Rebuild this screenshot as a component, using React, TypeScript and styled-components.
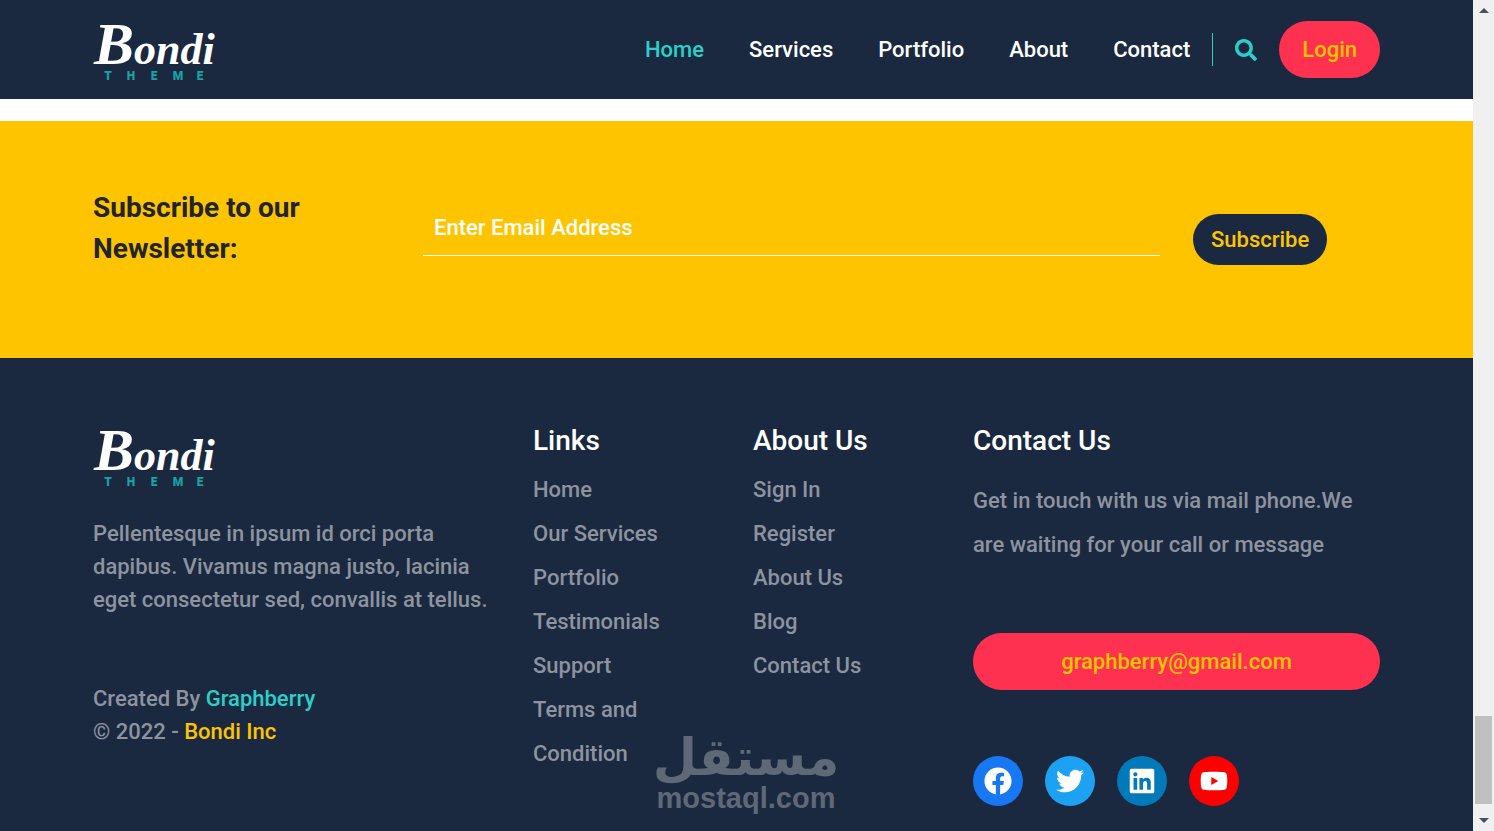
import React from "react";
import styled, { createGlobalStyle } from "styled-components";
import { FaSearch, FaFacebook, FaTwitter, FaLinkedin, FaYoutube } from "react-icons/fa";

const navy = "#1a293f";
const yellow = "#ffc400";
const teal = "#2ccfc8";
const red = "#ff3150";

const GlobalStyle = createGlobalStyle`
  *, *::before, *::after { box-sizing: border-box; }
  body {
    margin: 0;
    font-family: Roboto, "Liberation Sans", sans-serif;
    font-size: 22px;
    font-weight: 500;
    line-height: 33px;
    color: #212529;
    background: #fff;
  }
  a { color: inherit; text-decoration: none; }
  h2, h3, p, ul { margin: 0; padding: 0; font-weight: inherit; }
  ul { list-style: none; }
  button, input { font: inherit; border: 0; }
`;

const Shell = styled.div`
  display: flex;
  height: 100vh;
`;

const Page = styled.div`
  flex: 1;
  min-width: 0;
  display: flex;
  flex-direction: column;
  overflow: hidden;
`;

const Container = styled.div`
  width: 100%;
  max-width: 1287px;
  margin: 0 auto;
`;

const Columns = styled(Container)`
  display: grid;
  grid-template-columns: repeat(12, 1fr);
  column-gap: 33px;
`;

const Column = styled.div<{ $span: number }>`
  grid-column: span ${(p) => p.$span};
  min-width: 0;
`;

const Header = styled.header`
  flex: none;
  background: ${navy};
  padding: 18px 0;
`;

const HeaderRow = styled(Container)`
  display: flex;
  align-items: center;
  justify-content: space-between;
`;

const LogoLink = styled.a`
  display: block;
  width: 122px;
  height: 63px;
`;

const LogoSvg = styled.svg`
  display: block;
  overflow: visible;
`;

const Nav = styled.nav`
  display: flex;
  align-items: center;
`;

const NavList = styled.ul`
  display: flex;
  gap: 45px;
  padding-right: 22px;
  border-right: 1px solid ${teal};
`;

const NavLink = styled.a<{ $active?: boolean }>`
  color: ${(p) => (p.$active ? teal : "#fff")};
`;

const SearchButton = styled.button`
  display: flex;
  padding: 0;
  margin: 0 22px;
  background: none;
  color: ${teal};
`;

const PillLink = styled.a<{ $block?: boolean }>`
  display: ${(p) => (p.$block ? "block" : "inline-block")};
  padding: 12px 23px;
  border-radius: 29px;
  background: ${red};
  color: ${yellow};
  text-align: center;
`;

const Newsletter = styled.section`
  flex: none;
  margin-top: 22px;
  padding: 66px 0 89px;
  background: ${yellow};
`;

const NewsletterTitle = styled.label`
  display: block;
  font-size: 28px;
  font-weight: 700;
  line-height: 41px;
`;

const EmailInput = styled.input`
  display: block;
  width: 100%;
  height: 57px;
  margin-top: 12px;
  padding: 0 11px;
  border-bottom: 1px solid #fff;
  background: transparent;
  color: #fff;
  outline: none;
  &::placeholder { color: #fff; opacity: 1; }
`;

const SubscribeButton = styled.button`
  margin-top: 27px;
  padding: 9px 18px;
  border-radius: 26px;
  background: ${navy};
  color: ${yellow};
`;

const Footer = styled.footer`
  position: relative;
  flex: 1;
  padding-top: 66px;
  background: ${navy};
  color: #8d939f;
`;

const FooterTitle = styled.h3`
  margin-bottom: 11px;
  font-size: 28px;
  color: #fff;
`;

const LinkList = styled.ul`
  line-height: 44px;
`;

const About = styled.p`
  margin: 30px 0 66px;
`;

const Accent = styled.a<{ $color: string }>`
  color: ${(p) => p.$color};
`;

const ContactText = styled.p`
  margin: 22px 0 66px;
  line-height: 44px;
`;

const Socials = styled.div`
  display: flex;
  gap: 22px;
  margin-top: 66px;
`;

const Social = styled.a<{ $color: string }>`
  display: flex;
  align-items: center;
  justify-content: center;
  width: 50px;
  height: 50px;
  border-radius: 50%;
  background: ${(p) => p.$color};
  color: #fff;
`;

const Watermark = styled.div`
  position: absolute;
  left: 656px;
  bottom: 16px;
  color: #5e6876;
`;

const Scrollbar = styled.div`
  flex: none;
  width: 21px;
  padding: 8px 2px;
  display: flex;
  flex-direction: column;
  align-items: center;
  background: #f0f0f0;
`;

const Arrow = styled.i<{ $down?: boolean }>`
  border: 5px solid transparent;
  border-top: ${(p) => (p.$down ? "5px solid #475063" : "0")};
  border-bottom: ${(p) => (p.$down ? "0" : "5px solid #475063")};
`;

const Thumb = styled.i`
  width: 17px;
  height: 88px;
  margin: auto 0 14px;
  background: #c0c0c1;
`;

function Logo() {
  return (
    <LogoLink href="#" aria-label="Bondi Theme">
      <LogoSvg width="122" height="63" viewBox="0 0 122 63">
        <text
          x="1"
          y="46"
          fill="#fff"
          fontFamily="Liberation Serif, serif"
          fontStyle="italic"
          fontWeight="700"
          fontSize="60"
        >
          B<tspan fontSize="44">ondi</tspan>
        </text>
        <g fill="#16a3a8" fontFamily="Roboto, sans-serif" fontWeight="900" fontSize="12" textAnchor="middle">
          <text x="15" y="62">T</text>
          <text x="38" y="62">H</text>
          <text x="61" y="62">E</text>
          <text x="85" y="62">M</text>
          <text x="107" y="62">E</text>
        </g>
      </LogoSvg>
    </LogoLink>
  );
}

const navItems = ["Home", "Services", "Portfolio", "About", "Contact"];
const links = ["Home", "Our Services", "Portfolio", "Testimonials", "Support", "Terms and Condition"];
const aboutLinks = ["Sign In", "Register", "About Us", "Blog", "Contact Us"];
const socials = [
  { name: "Facebook", color: "#1877f2", Icon: FaFacebook },
  { name: "Twitter", color: "#1da1f2", Icon: FaTwitter },
  { name: "LinkedIn", color: "#0279b8", Icon: FaLinkedin },
  { name: "YouTube", color: "#ff0000", Icon: FaYoutube },
];

function Links({ items }: { items: string[] }) {
  return (
    <LinkList>
      {items.map((item) => (
        <li key={item}>
          <a href="#">{item}</a>
        </li>
      ))}
    </LinkList>
  );
}

export default function App() {
  return (
    <Shell>
      <GlobalStyle />
      <Page>
        <Header>
          <HeaderRow>
            <Logo />
            <Nav>
              <NavList>
                {navItems.map((item, i) => (
                  <li key={item}>
                    <NavLink href="#" $active={i === 0}>{item}</NavLink>
                  </li>
                ))}
              </NavList>
              <SearchButton type="button" aria-label="Search">
                <FaSearch size={22} />
              </SearchButton>
              <PillLink href="#">Login</PillLink>
            </Nav>
          </HeaderRow>
        </Header>

        <Newsletter>
          <Columns as="form">
            <Column $span={3}>
              <NewsletterTitle htmlFor="email">Subscribe to our Newsletter:</NewsletterTitle>
            </Column>
            <Column $span={7}>
              <EmailInput id="email" type="email" placeholder="Enter Email Address" />
            </Column>
            <Column $span={2}>
              <SubscribeButton type="button">Subscribe</SubscribeButton>
            </Column>
          </Columns>
        </Newsletter>

        <Footer>
          <Columns>
            <Column $span={4}>
              <Logo />
              <About>
                Pellentesque in ipsum id orci porta dapibus. Vivamus magna justo, lacinia eget consectetur sed,
                convallis at tellus.
              </About>
              <p>
                Created By <Accent href="#" $color={teal}>Graphberry</Accent>
              </p>
              <p>
                © 2022 - <Accent href="#" $color={yellow}>Bondi Inc</Accent>
              </p>
            </Column>
            <Column $span={2}>
              <FooterTitle>Links</FooterTitle>
              <Links items={links} />
            </Column>
            <Column $span={2}>
              <FooterTitle>About Us</FooterTitle>
              <Links items={aboutLinks} />
            </Column>
            <Column $span={4}>
              <FooterTitle>Contact Us</FooterTitle>
              <ContactText>Get in touch with us via mail phone.We are waiting for your call or message</ContactText>
              <PillLink href="#" $block>graphberry@gmail.com</PillLink>
              <Socials>
                {socials.map(({ name, color, Icon }) => (
                  <Social key={name} href="#" aria-label={name} $color={color}>
                    <Icon size={28} />
                  </Social>
                ))}
              </Socials>
            </Column>
          </Columns>
          <Watermark>
            <LogoSvg width="180" height="84" viewBox="0 0 180 84" fill="currentColor">
              <text x="90" y="44" textAnchor="middle" fontFamily="DejaVu Sans, sans-serif" fontWeight="700" fontSize="51">
                مستقل
              </text>
              <text x="90" y="77" textAnchor="middle" fontFamily="Liberation Sans, sans-serif" fontWeight="700" fontSize="29">
                mostaql.com
              </text>
            </LogoSvg>
          </Watermark>
        </Footer>
      </Page>
      <Scrollbar aria-hidden="true">
        <Arrow />
        <Thumb />
        <Arrow $down />
      </Scrollbar>
    </Shell>
  );
}
